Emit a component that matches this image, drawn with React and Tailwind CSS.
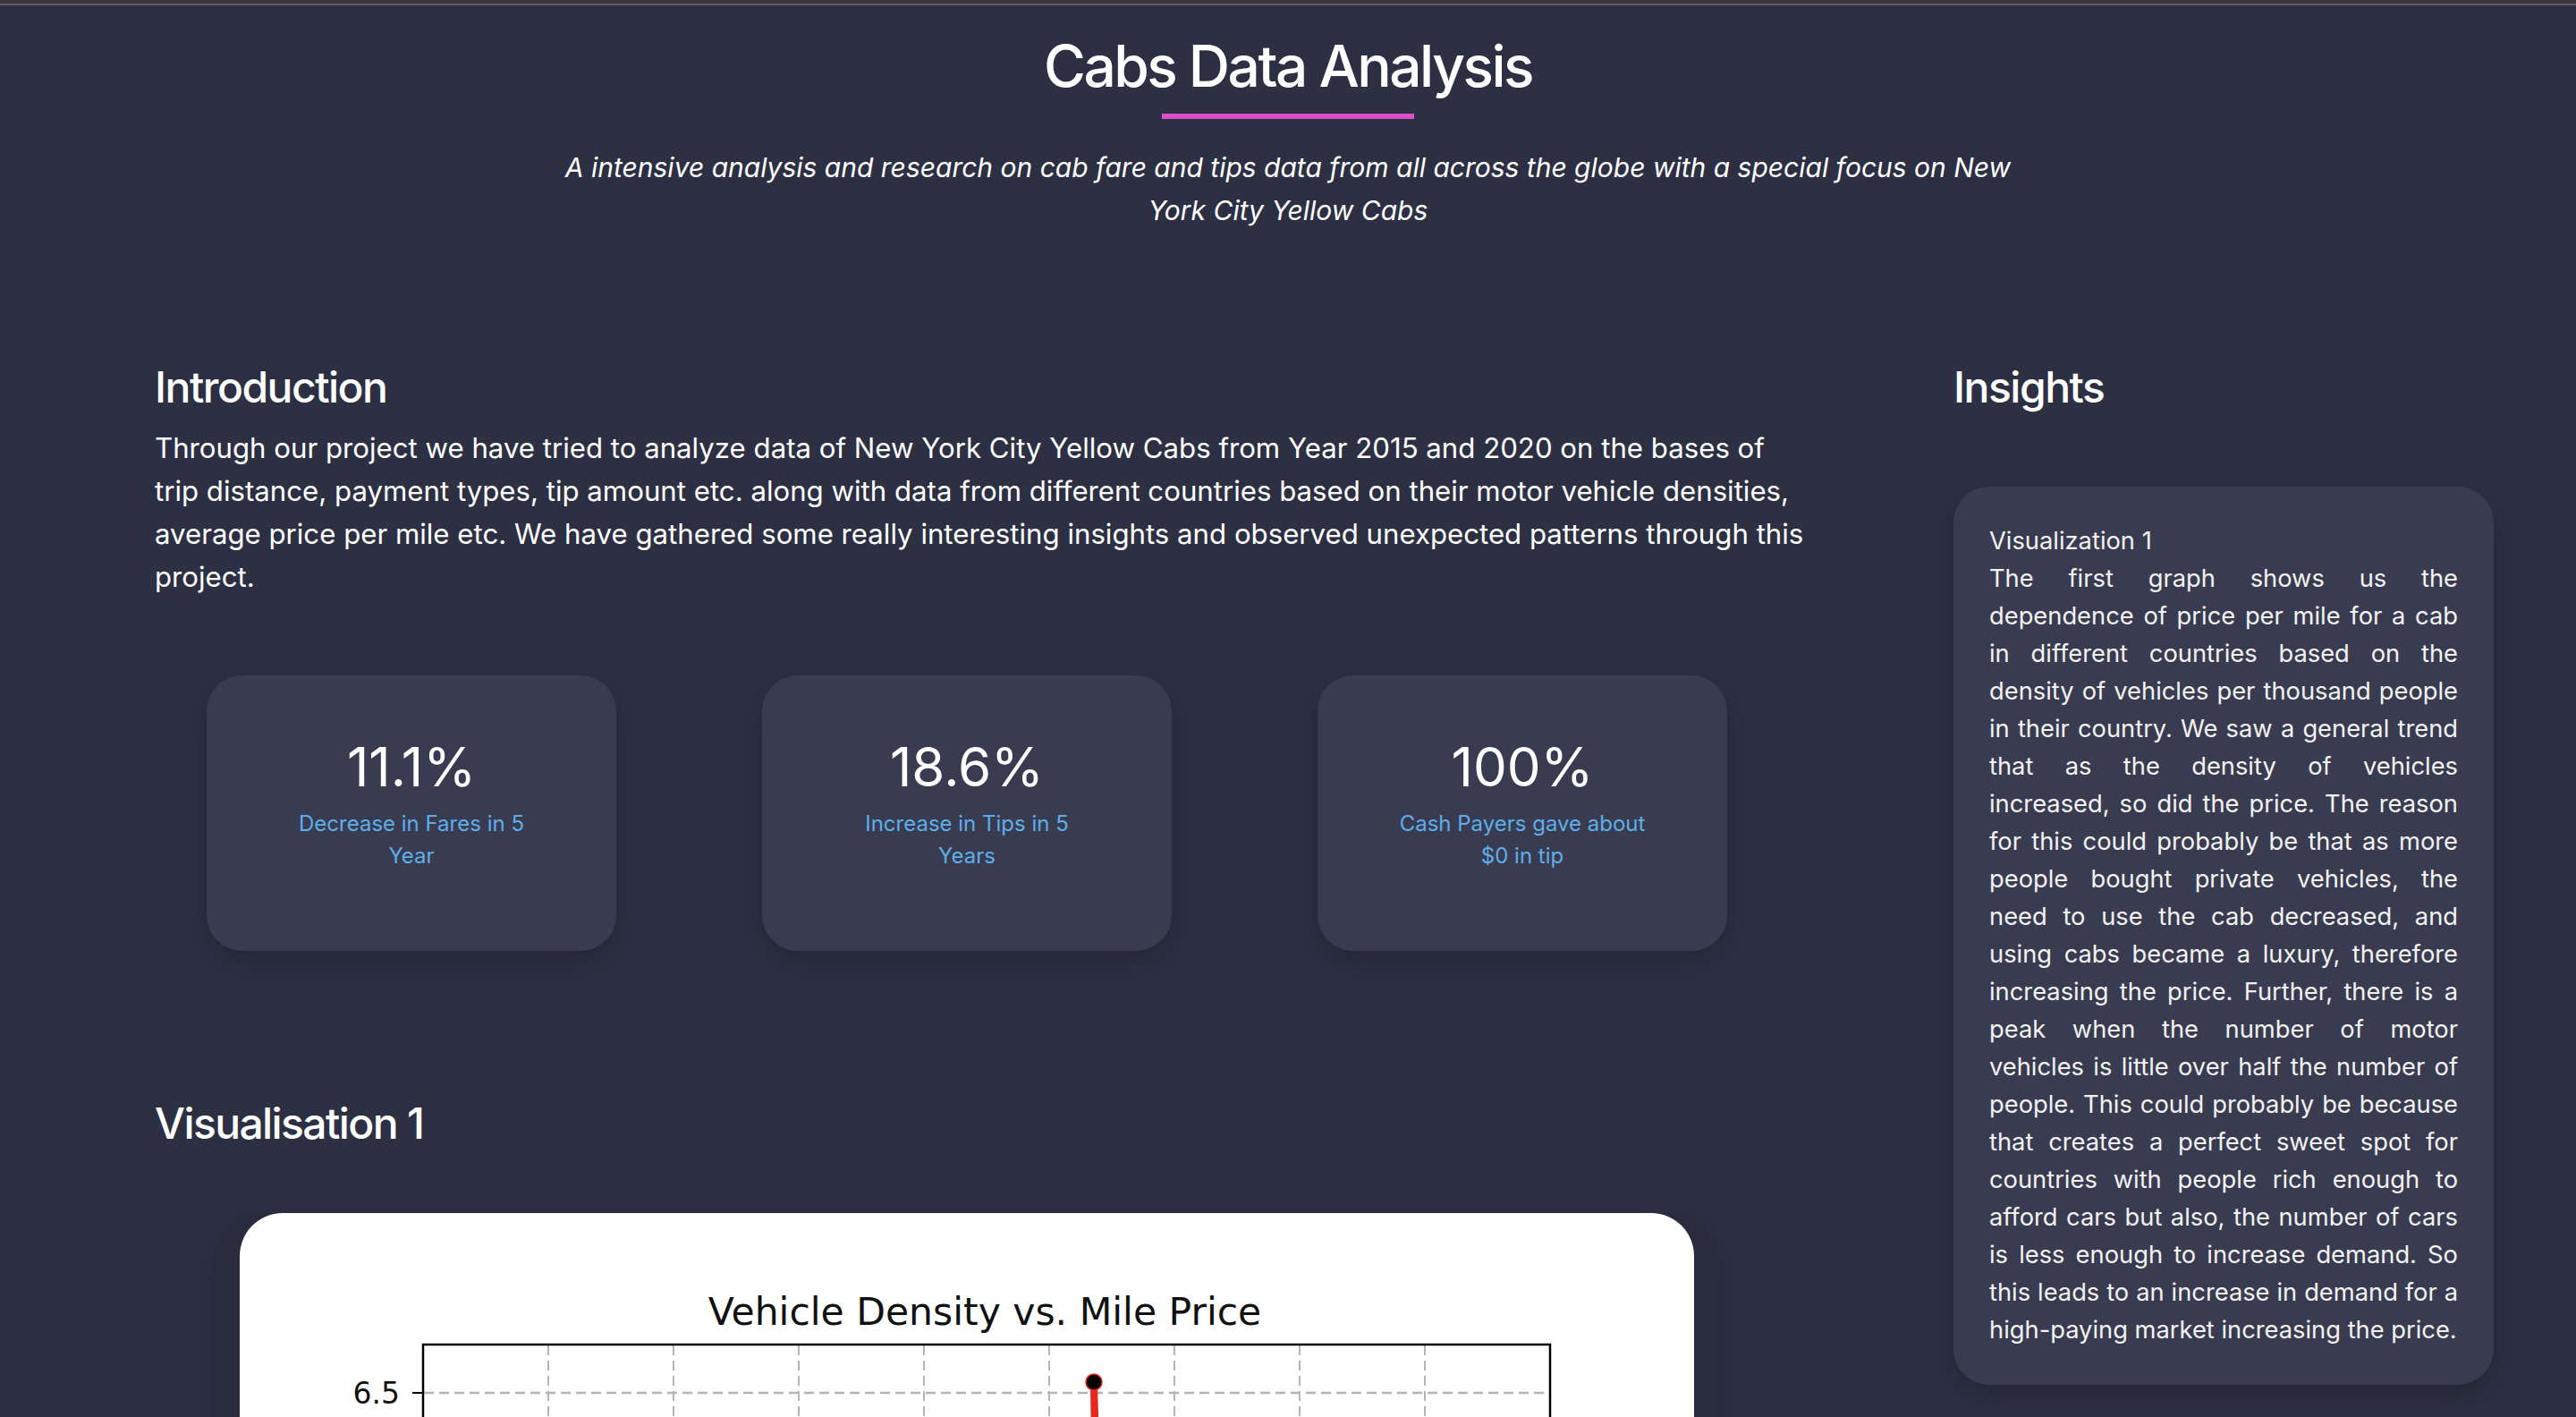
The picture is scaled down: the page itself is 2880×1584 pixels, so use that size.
import React from "react";

function StatCard({ value, label }) {
  return (
    <div className="w-[458px] h-[308px] shrink-0 rounded-[40px] bg-[#393c50] shadow-[0_12px_30px_rgba(0,0,0,0.22)] pt-[66px] flex flex-col items-center">
      <div className="text-[60px] leading-[72px] text-white">{value}</div>
      <div className="mt-[10px] max-w-[280px] text-center text-[24px] leading-[36px] text-[#5eaeea]">{label}</div>
    </div>
  );
}

function Chart() {
  const xs = [];
  for (let i = 1; i <= 8; i++) xs.push(205 + i * 140);
  return (
    <svg width="1626" height="700" viewBox="0 0 1626 700" className="block">
      <text x="833" y="125" textAnchor="middle" fontFamily="'DejaVu Sans', sans-serif" fontSize="42.5" fill="#111">
        Vehicle Density vs. Mile Price
      </text>
      {xs.map((x, i) => (
        <line key={i} x1={x} y1="148" x2={x} y2="700" stroke="#b5b5b5" strokeWidth="2" strokeDasharray="11 6" />
      ))}
      <line x1="206" y1="201" x2="1465" y2="201" stroke="#b5b5b5" strokeWidth="2.5" strokeDasharray="11 6" />
      <rect x="205" y="147" width="1260" height="600" fill="none" stroke="#000" strokeWidth="2.5" />
      <line x1="193" y1="201" x2="205" y2="201" stroke="#000" strokeWidth="2" />
      <text x="179" y="213" textAnchor="end" fontFamily="'DejaVu Sans', sans-serif" fontSize="33" fill="#111">6.5</text>
      <path d="M951,192 L959,192 L961,260 L963,330 L953,330 L952,260 Z" fill="#e8281e" />
      <circle cx="955" cy="189" r="9" fill="#000" stroke="#e8281e" strokeWidth="1.5" />
    </svg>
  );
}

export default function App() {
  return (
    <div className="min-h-screen bg-[#2d3043] text-white font-['Inter','Noto_Sans',sans-serif]">
      <div className="h-[4px] bg-[#38383b]" />
      <div className="h-[2px] bg-[#5e5e62]" />
      <header className="flex flex-col items-center pt-[29px]">
        <h1 className="text-[64px] leading-[77px] font-medium tracking-[-2.5px]">Cabs Data Analysis</h1>
        <div className="mt-[15px] h-[6px] w-[282px] bg-[#dc4fc8]" />
        <p className="mt-[30px] max-w-[1660px] text-center text-[30px] leading-[48px] italic">
          A intensive analysis and research on cab fare and tips data from all across the globe with a special focus on New York City Yellow Cabs
        </p>
      </header>
      <main className="flex pl-[173px] pt-[145px]">
        <section className="w-[1816px] shrink-0">
          <h2 className="text-[48px] leading-[58px] font-medium tracking-[-1.5px]">Introduction</h2>
          <p className="mt-[15px] w-[1845px] text-[31.2px] leading-[48px]">
            Through our project we have tried to analyze data of New York City Yellow Cabs from Year 2015 and 2020 on the bases of trip distance, payment types, tip amount etc. along with data from different countries based on their motor vehicle densities, average price per mile etc. We have gathered some really interesting insights and observed unexpected patterns through this project.
          </p>
          <div className="mt-[86px] flex justify-center gap-[163px]">
            <StatCard value="11.1%" label="Decrease in Fares in 5 Year" />
            <StatCard value="18.6%" label="Increase in Tips in 5 Years" />
            <StatCard value="100%" label="Cash Payers gave about $0 in tip" />
          </div>
          <h2 className="mt-[164px] text-[48px] leading-[58px] font-medium tracking-[-1.6px]">Visualisation 1</h2>
          <div className="mt-[71px] mx-auto w-[1674px] rounded-[48px] bg-[#292c3c] px-[24px] pb-[24px] shadow-[0_10px_30px_rgba(0,0,0,0.2)]">
            <div className="rounded-t-[48px] bg-white overflow-hidden">
              <Chart />
            </div>
          </div>
        </section>
        <aside className="ml-[195px] w-[604px] shrink-0">
          <h2 className="text-[48px] leading-[58px] font-medium tracking-[-1.5px]">Insights</h2>
          <div className="mt-[82px] rounded-[40px] bg-[#393c50] p-[40px] text-[27.3px] leading-[42px] text-[#f2f2f2] shadow-[0_12px_30px_rgba(0,0,0,0.22)]">
            <div>Visualization 1</div>
            <p className="text-justify">
              The first graph shows us the dependence of price per mile for a cab in different countries based on the density of vehicles per thousand people in their country. We saw a general trend that as the density of vehicles increased, so did the price. The reason for this could probably be that as more people bought private vehicles, the need to use the cab decreased, and using cabs became a luxury, therefore increasing the price. Further, there is a peak when the number of motor vehicles is little over half the number of people. This could probably be because that creates a perfect sweet spot for countries with people rich enough to afford cars but also, the number of cars is less enough to increase demand. So this leads to an increase in demand for a high-paying market increasing the price.
            </p>
          </div>
        </aside>
      </main>
    </div>
  );
}
